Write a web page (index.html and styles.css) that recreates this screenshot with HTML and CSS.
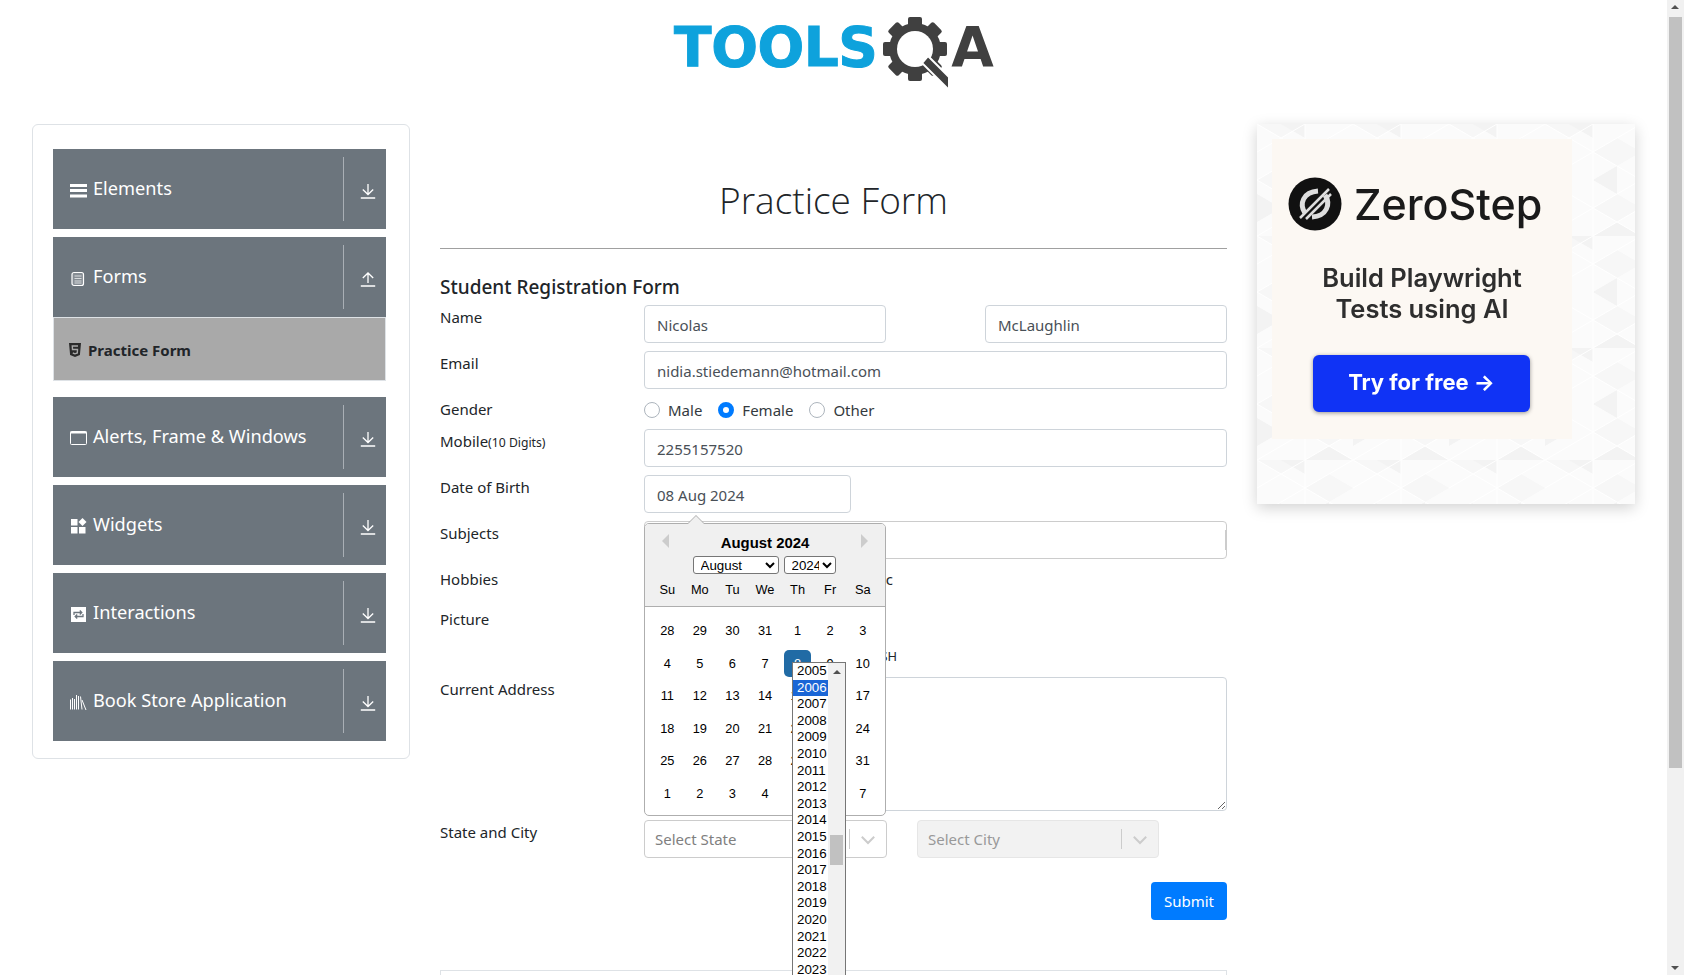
FILE: index.html
```html
<!DOCTYPE html>
<html lang="en">
<head>
    <meta charset="UTF-8">
    <meta name="viewport" content="width=device-width, initial-scale=1.0">
    <title>ToolsQA Practice Form</title>
    <link rel="stylesheet" href="styles.css">
</head>
<body>
    <div class="page">
        <div class="content">
            <!-- Logo -->
            <header class="top-banner">
                <div class="logo">
                    <span class="logo-tools">TOOLS</span>
                    <svg class="logo-gear" width="72" height="76" viewBox="0 0 72 76">
                        <g fill="#404040">
                            <circle cx="34" cy="34" r="26"/>
                            <rect x="27" y="2" width="14" height="64" rx="2"/>
                            <rect x="27" y="2" width="14" height="64" rx="2" transform="rotate(45 34 34)"/>
                            <rect x="27" y="2" width="14" height="64" rx="2" transform="rotate(90 34 34)"/>
                            <rect x="27" y="2" width="14" height="64" rx="2" transform="rotate(135 34 34)"/>
                        </g>
                        <circle cx="34" cy="34" r="18" fill="#fff"/>
                        <path d="M41 48 L47 41 L68 62 L68 75 Z" fill="#404040" stroke="#fff" stroke-width="2"/>
                    </svg>
                    <span class="logo-a">A</span>
                </div>
            </header>

            <div class="layout">
                <!-- Left menu -->
                <aside class="sidebar">
                    <div class="group-header">
                        <div class="group-title">
                            <svg class="group-icon" viewBox="0 0 18 18"><path fill="#fff" d="M1 3h17v3H1zM1 8h17v3H1zM1 13.500h17v3H1z"/></svg>
                            <span>Elements</span>
                        </div>
                        <span class="group-divider"></span>
                        <div class="group-arrow">
                            <svg width="16" height="16" viewBox="0 0 16 16"><path fill="none" stroke="#fff" stroke-width="1.300" d="M8 1v10M2.800 6.500 8 11.500l5.200-5M.8 15h14.400"/></svg>
                        </div>
                    </div>
                    <div class="group-header">
                        <div class="group-title">
                            <svg class="group-icon" viewBox="0 0 18 18"><rect x="3" y="3.500" width="11.500" height="13" rx="2" fill="#868d94" stroke="#fff" stroke-width="1.200"/><path stroke="#d9dcde" stroke-width="1" d="M5.500 7h7M5.500 9.500h7M5.500 12h7M5.500 14h7"/></svg>
                            <span>Forms</span>
                        </div>
                        <span class="group-divider"></span>
                        <div class="group-arrow">
                            <svg width="16" height="16" viewBox="0 0 16 16"><path fill="none" stroke="#fff" stroke-width="1.300" d="M8 12V2M2.800 7 8 2l5.200 5M.8 15h14.400"/></svg>
                        </div>
                    </div>
                    <div class="sub-list">
                        <div class="sub-item">
                            <svg width="14" height="16" viewBox="0 0 14 16"><path fill="#2b2b2b" d="M1 1h12l-1.100 12L7 15 2.100 13z"/><path fill="none" stroke="#a9a9a9" stroke-width="1.400" d="M10 4H4.300l.2 3.500H9.500L9.300 11 7 11.800 4.800 11"/></svg>
                            <span>Practice Form</span>
                        </div>
                    </div>
                    <div class="group-header">
                        <div class="group-title">
                            <svg class="group-icon" viewBox="0 0 18 18"><rect x="1.500" y="2.500" width="16" height="13" rx="1" fill="none" stroke="#fff" stroke-width="1"/><path stroke="#fff" stroke-width="2" d="M1.500 3.500h16"/></svg>
                            <span>Alerts, Frame &amp; Windows</span>
                        </div>
                        <span class="group-divider"></span>
                        <div class="group-arrow">
                            <svg width="16" height="16" viewBox="0 0 16 16"><path fill="none" stroke="#fff" stroke-width="1.300" d="M8 1v10M2.800 6.500 8 11.500l5.200-5M.8 15h14.400"/></svg>
                        </div>
                    </div>
                    <div class="group-header">
                        <div class="group-title">
                            <svg class="group-icon" viewBox="0 0 18 18"><path fill="#fff" d="M2 2h6.500v6.500H2zM2 10h6.500v6.500H2zM10 10h6.500v6.500H10zM13.500 1l4 4-4 4-4-4z"/></svg>
                            <span>Widgets</span>
                        </div>
                        <span class="group-divider"></span>
                        <div class="group-arrow">
                            <svg width="16" height="16" viewBox="0 0 16 16"><path fill="none" stroke="#fff" stroke-width="1.300" d="M8 1v10M2.800 6.500 8 11.500l5.200-5M.8 15h14.400"/></svg>
                        </div>
                    </div>
                    <div class="group-header">
                        <div class="group-title">
                            <svg class="group-icon" viewBox="0 0 18 18"><rect x="2" y="2" width="15" height="15" fill="#fff"/><path fill="none" stroke="#6c757d" stroke-width="1.300" d="M5 10V7.500h7.500M10.800 5.500l2 2-2 2M14 9v2.500H6.500M8.200 13.500l-2-2 2-2"/></svg>
                            <span>Interactions</span>
                        </div>
                        <span class="group-divider"></span>
                        <div class="group-arrow">
                            <svg width="16" height="16" viewBox="0 0 16 16"><path fill="none" stroke="#fff" stroke-width="1.300" d="M8 1v10M2.800 6.500 8 11.500l5.200-5M.8 15h14.400"/></svg>
                        </div>
                    </div>
                    <div class="group-header">
                        <div class="group-title">
                            <svg class="group-icon" viewBox="0 0 18 18"><path fill="none" stroke="#fff" stroke-width="1" d="M1.500 6.500v10M3.500 5v11.500M5.500 6v10.500M7.500 2v14.500M9.500 3v13.500M11.500 3.500l1.500 13M13 7l4 10"/></svg>
                            <span>Book Store Application</span>
                        </div>
                        <span class="group-divider"></span>
                        <div class="group-arrow">
                            <svg width="16" height="16" viewBox="0 0 16 16"><path fill="none" stroke="#fff" stroke-width="1.300" d="M8 1v10M2.800 6.500 8 11.500l5.200-5M.8 15h14.400"/></svg>
                        </div>
                    </div>
                </aside>

                <!-- Form -->
                <main class="main">
                    <h1 class="main-title">Practice Form</h1>
                    <hr class="main-rule">
                    <h5 class="form-title">Student Registration Form</h5>

                    <div class="row">
                        <label class="row-label">Name</label>
                        <div class="name-fields">
                            <input class="field" type="text" value="Nicolas">
                            <input class="field" type="text" value="McLaughlin">
                        </div>
                    </div>
                    <div class="row">
                        <label class="row-label">Email</label>
                        <input class="field grow" type="text" value="nidia.stiedemann@hotmail.com">
                    </div>
                    <div class="row">
                        <label class="row-label">Gender</label>
                        <div class="radio-group">
                            <span class="radio"></span><span class="radio-text">Male</span>
                            <span class="radio checked"></span><span class="radio-text">Female</span>
                            <span class="radio"></span><span class="radio-text">Other</span>
                        </div>
                    </div>
                    <div class="row">
                        <label class="row-label">Mobile<small>(10 Digits)</small></label>
                        <input class="field grow" type="text" value="2255157520">
                    </div>
                    <div class="row">
                        <label class="row-label">Date of Birth</label>
                        <div class="dob">
                            <input class="field dob-input" type="text" value="08 Aug 2024">

                            <!-- Open date picker, lies over the rows below -->
                            <div class="picker">
                                <div class="picker-head">
                                    <span class="nav nav-prev"></span>
                                    <span class="nav nav-next"></span>
                                    <div class="picker-month">August 2024</div>
                                    <div class="picker-selects">
                                        <select class="month-select"><option>August</option></select>
                                        <select class="year-select"><option>2024</option></select>
                                    </div>
                                    <div class="week week-names">
                                        <span>Su</span><span>Mo</span><span>Tu</span><span>We</span><span>Th</span><span>Fr</span><span>Sa</span>
                                    </div>
                                </div>
                                <div class="days">
                                    <div class="week"><span>28</span><span>29</span><span>30</span><span>31</span><span>1</span><span>2</span><span>3</span></div>
                                    <div class="week"><span>4</span><span>5</span><span>6</span><span>7</span><span class="day-on">8</span><span>9</span><span>10</span></div>
                                    <div class="week"><span>11</span><span>12</span><span>13</span><span>14</span><span>15</span><span>16</span><span>17</span></div>
                                    <div class="week"><span>18</span><span>19</span><span>20</span><span>21</span><span>22</span><span>23</span><span>24</span></div>
                                    <div class="week"><span>25</span><span>26</span><span>27</span><span>28</span><span>29</span><span>30</span><span>31</span></div>
                                    <div class="week"><span>1</span><span>2</span><span>3</span><span>4</span><span>5</span><span>6</span><span>7</span></div>
                                </div>
                                <div class="year-menu">
                                    <div class="year-list">
                                        <div>2005</div><div class="year-on">2006</div><div>2007</div><div>2008</div><div>2009</div><div>2010</div><div>2011</div><div>2012</div><div>2013</div><div>2014</div><div>2015</div><div>2016</div><div>2017</div><div>2018</div><div>2019</div><div>2020</div><div>2021</div><div>2022</div><div>2023</div>
                                    </div>
                                    <div class="year-scroll">
                                        <span class="year-up"></span>
                                        <span class="year-thumb"></span>
                                    </div>
                                </div>
                            </div>
                        </div>
                    </div>
                    <div class="row">
                        <label class="row-label">Subjects</label>
                        <div class="field subjects grow"><span class="subjects-mark"></span></div>
                    </div>
                    <div class="row hobbies-row">
                        <label class="row-label">Hobbies</label>
                        <div class="hobbies">Sports Reading Music</div>
                    </div>
                    <div class="row picture-row">
                        <label class="row-label">Picture</label>
                        <div class="file-name">MOUNTAIN_SPLASH</div>
                    </div>
                    <div class="row address-row">
                        <label class="row-label">Current Address</label>
                        <textarea class="field grow address"></textarea>
                    </div>
                    <div class="row state-row">
                        <label class="row-label">State and City</label>
                        <div class="selects">
                            <div class="combo">
                                <span class="combo-text">Select State</span>
                                <span class="combo-sep"></span>
                                <svg width="20" height="20" viewBox="0 0 20 20"><path fill="#ccc" d="M4.500 7.100 3.100 8.500 10 15.400l6.900-6.900-1.400-1.400-5.500 5.400z"/></svg>
                            </div>
                            <div class="combo combo-off">
                                <span class="combo-text">Select City</span>
                                <span class="combo-sep"></span>
                                <svg width="20" height="20" viewBox="0 0 20 20"><path fill="#ccc" d="M4.500 7.100 3.100 8.500 10 15.400l6.900-6.900-1.400-1.400-5.500 5.400z"/></svg>
                            </div>
                        </div>
                    </div>
                    <div class="submit-row">
                        <button class="submit">Submit</button>
                    </div>
                    <div class="below-box"></div>
                </main>

                <!-- Advert -->
                <aside class="ad">
                    <svg class="ad-pattern" width="378" height="380">
                        <defs>
                            <pattern id="tri" width="96" height="112" patternUnits="userSpaceOnUse">
                                <path fill="#f7f7f7" d="M0 0l24 14L48 0zM48 28l24-14 24 14-24 14zM0 56l24 14V42zM48 84l24-14 24 14-24 14z"/>
                                <path fill="#f3f3f3" d="M48 56l24 14V42zM24 84 0 98V70zM24 0l24 14V0zM72 98l24 14H48z"/>
                                <path fill="none" stroke="#fff" stroke-width="1" d="M0 0l96 56M96 0 0 56M0 56l96 56M96 56 0 112M48 0v112M0 28l48-28M48 112l48-28"/>
                            </pattern>
                        </defs>
                        <rect width="378" height="380" fill="#fbfbfb"/>
                        <rect width="378" height="380" fill="url(#tri)"/>
                    </svg>
                    <div class="ad-panel">
                        <div class="ad-brand">
                            <svg width="54" height="54" viewBox="0 0 54 54">
                                <circle cx="27" cy="27" r="26.500" fill="#111"/>
                                <path fill="none" stroke="#ddd" stroke-width="5" d="M17 36C11 27 15 15 30 14M37 18c6 9 2 21-13 22"/>
                                <path fill="none" stroke="#ddd" stroke-width="2.500" d="M12 41 41 12M18 42 43 17"/>
                            </svg>
                            <span>ZeroStep</span>
                        </div>
                        <div class="ad-copy">Build Playwright<br>Tests using AI</div>
                        <div class="ad-button">Try for free →</div>
                    </div>
                </aside>
            </div>
        </div>

        <!-- Window scrollbar -->
        <div class="scrollbar">
            <span class="scroll-up"></span>
            <span class="scroll-thumb"></span>
            <span class="scroll-down"></span>
        </div>
    </div>
</body>
</html>
```

FILE: styles.css
```css
html, body {
    margin: 0;
    padding: 0;
    height: 100%;
    overflow: hidden;
    background: #fff;
}

body {
    font-family: "Noto Sans", "Open Sans", sans-serif;
    font-size: 15px;
    line-height: 24px;
    color: #212529;
}

.page {
    display: flex;
    height: 975px;
    overflow: hidden;
}

.content {
    flex: 1;
    min-width: 0;
}

/* Logo */
.top-banner {
    height: 124px;
    display: flex;
    justify-content: center;
    box-sizing: border-box;
    padding-left: 1px;
}

.logo {
    display: flex;
    align-items: flex-start;
    height: 92px;
}

.logo-tools, .logo-a {
    font-family: "DejaVu Sans", sans-serif;
    font-weight: 700;
    font-size: 55px;
    line-height: 64px;
    margin-top: 15px;
}

.logo-tools {
    color: #0ea2dc;
    letter-spacing: -.5px;
    -webkit-text-stroke: 1px #0ea2dc;
}

.logo-a {
    color: #404040;
    margin-left: -2px;
}

.logo-gear {
    margin-top: 15px;
    margin-left: 4px;
}

.layout {
    display: grid;
    grid-template-columns: 378px 787px 378px;
    column-gap: 30px;
    padding-left: 32px;
    align-items: start;
}

/* Left menu */
.sidebar {
    box-sizing: border-box;
    height: 635px;
    padding: 24px 23px 0 20px;
    border: 1px solid #dee2e6;
    border-radius: 6px;
}

.group-header {
    display: flex;
    align-items: center;
    height: 80px;
    margin-bottom: 8px;
    background: #6c757d;
    color: #fff;
    font-size: 18.2px;
}

.group-title {
    flex: 1;
    display: flex;
    align-items: center;
    gap: 6px;
    padding-left: 16px;
    position: relative;
    top: -1px;
}

.group-icon {
    width: 18px;
    height: 18px;
    position: relative;
    top: 2px;
}

.group-divider {
    width: 1px;
    height: 64px;
    background: #a9afb5;
}

.group-arrow {
    width: 42px;
    display: flex;
    justify-content: center;
    padding-top: 3px;
    padding-left: 6px;
    box-sizing: border-box;
}

.sub-list {
    margin: -8px 0 16px;
}

.sub-item {
    box-sizing: border-box;
    display: flex;
    align-items: center;
    gap: 6px;
    height: 64px;
    padding: 2px 0 0 14px;
    background: #a9a9a9;
    border: 1px solid #dee2e6;
    font-size: 15px;
    font-weight: 700;
    color: #212529;
}

/* Form */
.main-title {
    margin: 52px 0 24px;
    font-size: 37px;
    font-weight: 300;
    line-height: 48px;
    text-align: center;
    color: #212529;
    font-family: "Open Sans", sans-serif;
}

.main-rule {
    margin: 0 0 26px;
    border: 0;
    border-top: 1px solid #a0a0a0;
}

.form-title {
    margin: 0 0 6px;
    font-size: 19px;
    font-weight: 500;
    line-height: 24px;
    color: #212529;
}

.row {
    display: flex;
    margin-bottom: 8px;
}

.row-label {
    flex: 0 0 204px;
    line-height: 24px;
}

.row-label small {
    font-size: 12.200px;
}

.field {
    box-sizing: border-box;
    height: 38px;
    padding: 7px 12px 5px;
    border: 1px solid #ced4da;
    border-radius: 4px;
    background: #fff;
    font: inherit;
    color: #495057;
    outline: none;
}

.grow {
    flex: 1;
    min-width: 0;
}

.name-fields {
    flex: 1;
    display: flex;
    justify-content: space-between;
}

.name-fields .field {
    width: 242px;
}

.radio-group {
    box-sizing: border-box;
    display: flex;
    align-items: center;
    height: 24px;
    padding-top: 1px;
}

.radio {
    box-sizing: border-box;
    width: 16px;
    height: 16px;
    border-radius: 50%;
    border: 1px solid #adb5bd;
    background: #fff;
}

.radio.checked {
    border: 5px solid #007bff;
}

.radio-text {
    margin: 0 16px 0 8px;
    color: #343a40;
}

.dob {
    position: relative;
}

.dob-input {
    display: block;
    width: 207px;
}

.subjects {
    position: relative;
    border-color: #ccc;
}

.subjects-mark {
    position: absolute;
    right: 0;
    top: 8px;
    width: 1px;
    height: 20px;
    background: #ccc;
}

.hobbies-row {
    height: 24px;
    margin-bottom: 16px;
}

.hobbies {
    width: 249px;
    text-align: right;
    color: #212529;
}

.picture-row {
    height: 62px;
}

.file-name {
    box-sizing: border-box;
    width: 253px;
    padding-top: 37px;
    text-align: right;
    font-size: 12.800px;
}

.address-row {
    height: 135px;
    margin-bottom: 8px;
}

.address {
    height: 134px;
}

.state-row {
    margin-bottom: 24px;
}

.selects {
    display: flex;
    gap: 30px;
}

.combo {
    box-sizing: border-box;
    display: flex;
    align-items: center;
    width: 243px;
    height: 38px;
    padding: 0 8px 0 10px;
    border: 1px solid #ccc;
    border-radius: 4px;
    color: #808080;
}

.combo-off {
    width: 242px;
    background: #f2f2f2;
    border-color: #e6e6e6;
    color: #999;
}

.combo-text {
    flex: 1;
}

.combo-sep {
    width: 1px;
    height: 20px;
    margin-right: 8px;
    background: #ccc;
}

.submit-row {
    display: flex;
    justify-content: flex-end;
}

.submit {
    width: 76px;
    height: 38px;
    padding: 0;
    border: 0;
    border-radius: 4px;
    background: #007bff;
    color: #fff;
    font: inherit;
}

.below-box {
    height: 80px;
    margin-top: 50px;
    border: 1px solid #dee2e6;
}

/* Date picker */
.picker {
    position: absolute;
    left: 0;
    top: 48px;
    width: 242px;
    height: 293px;
    box-sizing: border-box;
    background: #fff;
    border: 1px solid #aeaeae;
    border-radius: 5px;
    font-family: "Liberation Sans", Arial, sans-serif;
    font-size: 12.800px;
    line-height: 16px;
    color: #000;
    z-index: 5;
}

.picker::before, .picker::after {
    content: "";
    position: absolute;
    left: 43px;
    border: 8px solid transparent;
    border-top: 0;
}

.picker::before {
    top: -9px;
    border-bottom-color: #aeaeae;
}

.picker::after {
    top: -8px;
    border-bottom-color: #f0f0f0;
}

.picker-head {
    position: relative;
    box-sizing: border-box;
    height: 83px;
    padding: 11px 6px 0;
    background: #f0f0f0;
    border-bottom: 1px solid #aeaeae;
    border-radius: 4px 4px 0 0;
}

.nav {
    position: absolute;
    top: 10px;
    border: 7px solid transparent;
}

.nav-prev {
    left: 17px;
    border-left: 0;
    border-right-color: #ccc;
}

.nav-next {
    right: 17px;
    border-right: 0;
    border-left-color: #ccc;
}

.picker-month {
    text-align: center;
    font-size: 14.900px;
    font-weight: 700;
    line-height: 17px;
}

.picker-selects {
    display: flex;
    justify-content: center;
    gap: 5px;
    margin-top: 4px;
    padding-right: 2px;
}

.month-select, .year-select {
    box-sizing: border-box;
    height: 18px;
    padding: 0 0 0 3px;
    font-family: "Liberation Sans", Arial, sans-serif;
    font-size: 13.333px;
    background: #fff;
    color: #000;
    border: 1px solid #767676;
    border-radius: 3px;
}

.month-select {
    width: 86px;
}

.year-select {
    width: 52px;
}

.week {
    display: grid;
    grid-template-columns: repeat(7, 1fr);
    height: 32.500px;
    align-items: center;
    justify-items: center;
}

.week-names {
    height: 16px;
    margin-top: 8px;
}

.days {
    padding: 8px 6px 0;
}

.day-on {
    width: 27px;
    height: 27px;
    line-height: 27px;
    text-align: center;
    border-radius: 5px;
    background: #216ba5;
    color: #fff;
}

.year-menu {
    position: absolute;
    left: 147px;
    top: 138px;
    box-sizing: border-box;
    display: flex;
    width: 54px;
    height: 400px;
    background: #fff;
    border: 1px solid #767676;
    font-size: 13.333px;
    line-height: 16.600px;
    overflow: hidden;
    z-index: 6;
}

.year-list {
    width: 35px;
}

.year-list div {
    padding-left: 4px;
}

.year-list .year-on {
    background: #1a66d6;
    color: #fff;
}

.year-scroll {
    position: relative;
    flex: 1;
    background: #f1f1f1;
}

.year-up {
    position: absolute;
    top: 7px;
    left: 5px;
    border: 4px solid transparent;
    border-top: 0;
    border-bottom: 4px solid #505050;
}

.year-thumb {
    position: absolute;
    top: 172px;
    left: 2px;
    width: 13px;
    height: 30px;
    background: #c1c1c1;
}

/* Advert */
.ad {
    position: relative;
    height: 380px;
    box-shadow: 0 4px 14px rgba(0, 0, 0, .18);
    font-family: Inter, "Noto Sans", sans-serif;
    overflow: hidden;
}

.ad-pattern {
    position: absolute;
    left: 0;
    top: 0;
}

.ad-panel {
    position: relative;
    box-sizing: border-box;
    width: 300px;
    height: 300px;
    margin: 15px 0 0 15px;
    padding-top: 38px;
    background: #fcf8f3;
    color: #1a1a1a;
    filter: blur(.4px);
}

.ad-brand {
    display: flex;
    align-items: center;
    gap: 12px;
    padding-left: 16px;
    height: 54px;
    font-size: 43px;
    font-weight: 500;
    line-height: 54px;
    white-space: nowrap;
}

.ad-copy {
    width: 300px;
    margin: 31px 0 0;
    font-size: 25.500px;
    font-weight: 600;
    line-height: 31px;
    text-align: center;
    color: #2e2e2e;
}

.ad-button {
    width: 217px;
    height: 57px;
    margin: 31px 0 0 41px;
    border-radius: 6px;
    background: #1033f5;
    box-shadow: 0 1px 4px rgba(0, 0, 0, .4);
    color: #fff;
    font-size: 22px;
    font-weight: 700;
    line-height: 54px;
    text-align: center;
}

/* Window scrollbar */
.scrollbar {
    position: relative;
    flex: 0 0 17px;
    background: #f1f1f1;
}

.scroll-up, .scroll-down {
    position: absolute;
    left: 4px;
    border: 4.500px solid transparent;
}

.scroll-up {
    top: 5px;
    border-top: 0;
    border-bottom-color: #505050;
}

.scroll-down {
    bottom: 5px;
    border-bottom: 0;
    border-top-color: #505050;
}

.scroll-thumb {
    position: absolute;
    left: 2px;
    top: 17px;
    width: 13px;
    height: 751px;
    background: #c1c1c1;
}
```
